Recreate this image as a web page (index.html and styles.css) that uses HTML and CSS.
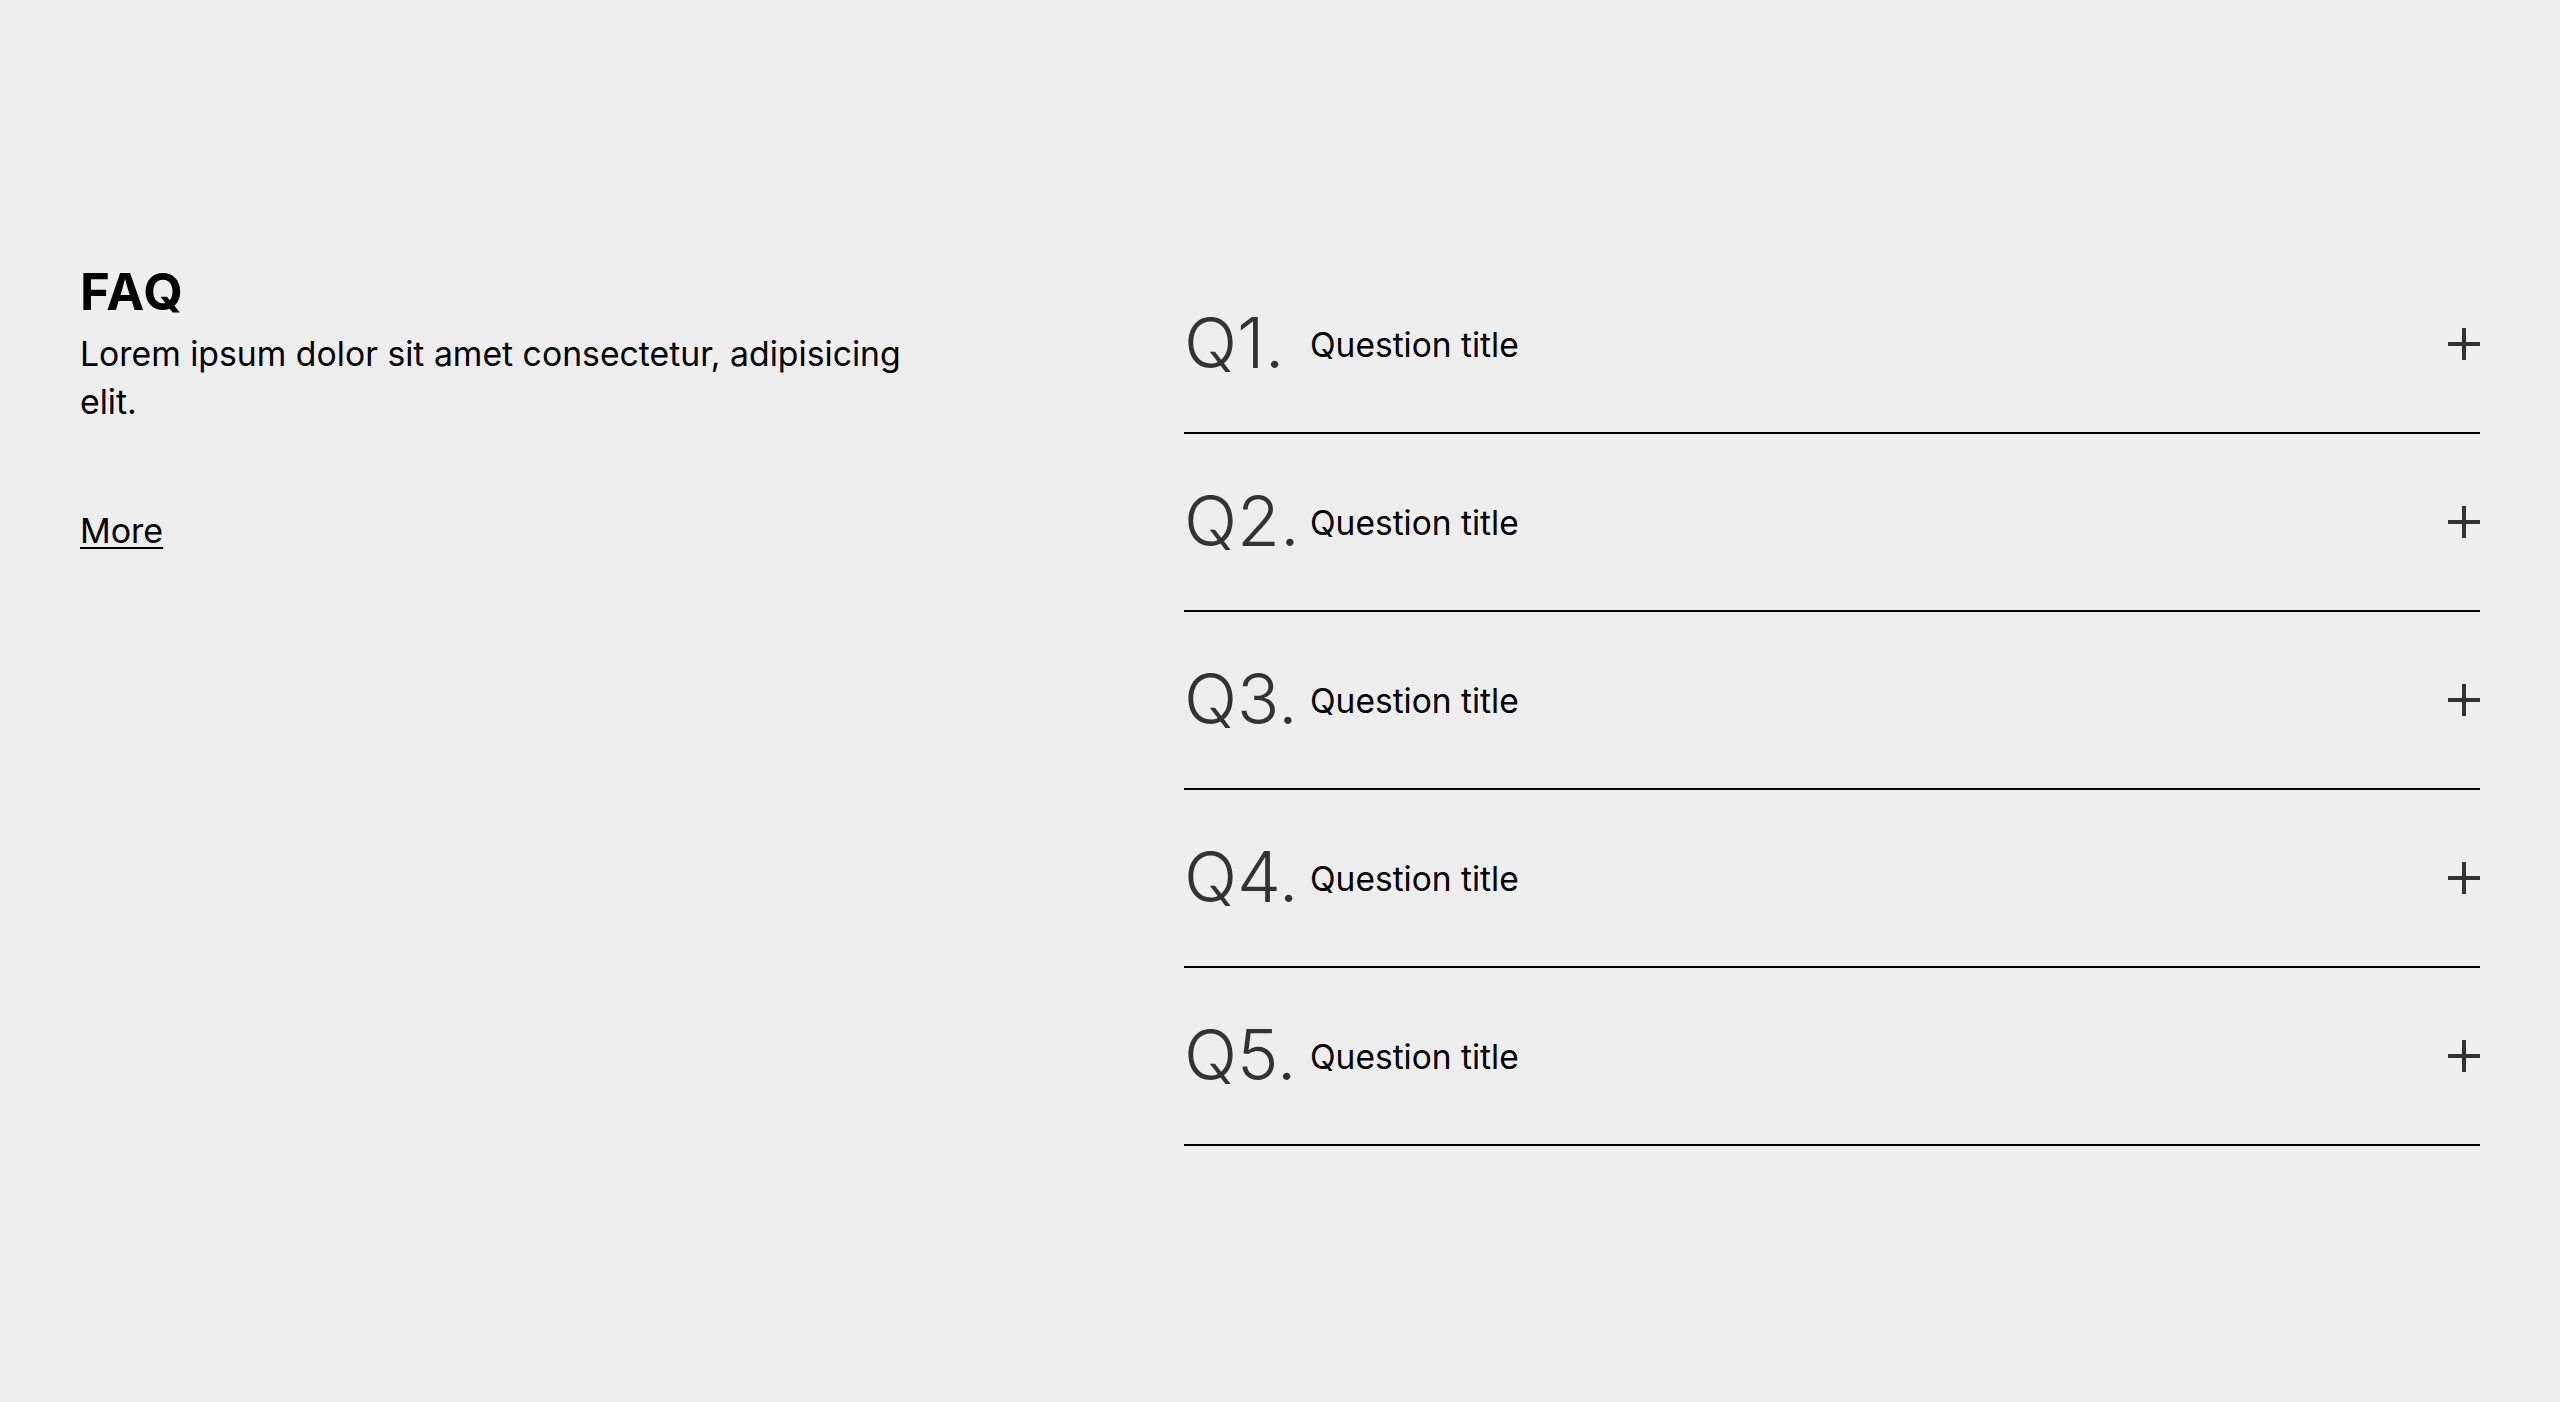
FILE: index.html
```html
<!DOCTYPE html>
<html lang="en">
<head>
<meta charset="utf-8">
<title>FAQ</title>
<link rel="stylesheet" href="styles.css">
</head>
<body>
<main class="faq">
  <section class="faq-intro">
    <h2 class="faq-title">FAQ</h2>
    <p class="faq-lead">Lorem ipsum dolor sit amet consectetur, adipisicing elit.</p>
    <a class="faq-more" href="#">More</a>
  </section>
  <ul class="faq-list">
    <li class="faq-item">
      <span class="faq-num">Q1.</span>
      <span class="faq-q">Question title</span>
      <svg class="faq-plus" viewBox="0 0 32 32" aria-hidden="true"><path d="M0 16H32M16 0V32"/></svg>
    </li>
    <li class="faq-item">
      <span class="faq-num">Q2.</span>
      <span class="faq-q">Question title</span>
      <svg class="faq-plus" viewBox="0 0 32 32" aria-hidden="true"><path d="M0 16H32M16 0V32"/></svg>
    </li>
    <li class="faq-item">
      <span class="faq-num">Q3.</span>
      <span class="faq-q">Question title</span>
      <svg class="faq-plus" viewBox="0 0 32 32" aria-hidden="true"><path d="M0 16H32M16 0V32"/></svg>
    </li>
    <li class="faq-item">
      <span class="faq-num">Q4.</span>
      <span class="faq-q">Question title</span>
      <svg class="faq-plus" viewBox="0 0 32 32" aria-hidden="true"><path d="M0 16H32M16 0V32"/></svg>
    </li>
    <li class="faq-item">
      <span class="faq-num">Q5.</span>
      <span class="faq-q">Question title</span>
      <svg class="faq-plus" viewBox="0 0 32 32" aria-hidden="true"><path d="M0 16H32M16 0V32"/></svg>
    </li>
  </ul>
</main>
</body>
</html>
```
FILE: styles.css
```css
html, body {
  margin: 0;
  padding: 0;
  background: #eeeeee;
}

body {
  font-family: Inter, "Noto Sans", sans-serif;
  color: #000;
}

.faq {
  display: flex;
  justify-content: space-between;
  align-items: flex-start;
  padding: 256px 80px 0;
}

.faq-intro {
  width: 860px;
}

.faq-title {
  margin: 0;
  font-size: 51px;
  line-height: 71px;
  font-weight: 700;
  letter-spacing: 1px;
}

.faq-lead {
  margin: 3px 0 0;
  font-size: 33.75px;
  line-height: 48.4px;
  font-weight: 400;
}

.faq-more {
  display: inline-block;
  margin-top: 80px;
  font-size: 34px;
  line-height: 48px;
  color: #000;
  text-decoration: underline;
  text-decoration-thickness: 2px;
  text-underline-offset: 4px;
}

.faq-list {
  list-style: none;
  margin: 0;
  padding: 0;
  width: 1296px;
}

.faq-item {
  display: flex;
  align-items: center;
  gap: 22px;
  height: 176px;
  border-bottom: 2px solid #000;
}

.faq-num {
  width: 104px;
  flex: 0 0 104px;
  font-size: 70px;
  line-height: 70px;
  font-weight: 300;
  color: #333;
  padding-bottom: 3px;
}

.faq-q {
  flex: 1;
  font-size: 33.5px;
  line-height: 33.5px;
  color: #000;
  padding-top: 3px;
}

.faq-plus {
  width: 32px;
  height: 32px;
  flex: 0 0 32px;
  stroke: #333;
  stroke-width: 4;
  fill: none;
}
```
